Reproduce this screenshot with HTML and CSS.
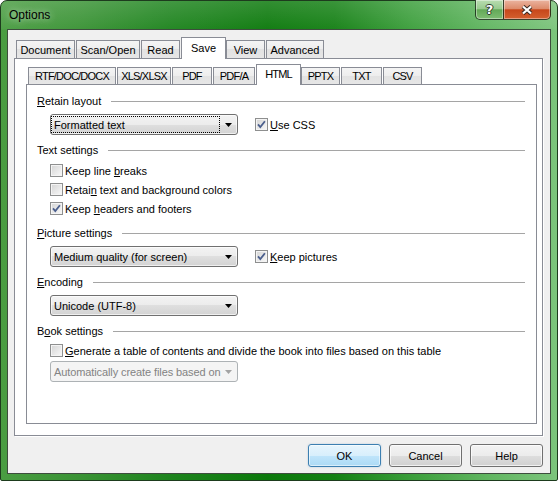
FILE: index.html
```html
<!DOCTYPE html>
<html>
<head>
<meta charset="utf-8">
<title>Options</title>
<link rel="stylesheet" href="styles.css">
</head>
<body>
<div class="window">
  <div class="titlebar">
    <span class="title">Options</span>
    <div class="caption-btns">
      <div class="cbtn help">?</div>
      <div class="cbtn close">
        <svg class="xglyph" width="12" height="10" viewBox="0 0 12 10">
          <path d="M2 1.5 L10 8.5 M10 1.5 L2 8.5" stroke="#3b2a22" stroke-width="4.2" fill="none"/>
          <path d="M2 1.5 L10 8.5 M10 1.5 L2 8.5" stroke="#ffffff" stroke-width="2.3" fill="none"/>
        </svg>
      </div>
    </div>
  </div>
  <div class="client">
    <div class="tabs tabs-outer">
      <div class="tab w-doc">Document</div>
      <div class="tab w-scan">Scan/Open</div>
      <div class="tab w-read">Read</div>
      <div class="tab sel w-save">Save</div>
      <div class="tab w-view">View</div>
      <div class="tab w-adv">Advanced</div>
    </div>
    <div class="panel panel-outer">
      <div class="tabs tabs-inner">
        <div class="tab caps w-rtf">RTF/DOC/DOCX</div>
        <div class="tab caps w-xls">XLS/XLSX</div>
        <div class="tab caps w-pdf">PDF</div>
        <div class="tab caps w-pdfa">PDF/A</div>
        <div class="tab caps sel w-html">HTML</div>
        <div class="tab caps w-pptx">PPTX</div>
        <div class="tab caps w-txt">TXT</div>
        <div class="tab caps w-csv">CSV</div>
      </div>
      <div class="panel panel-inner">
        <div class="group">
          <div class="ghead"><span><u>R</u>etain layout</span><i class="rule"></i></div>
          <div class="combo-row">
            <div class="combo focus">
              <span class="combo-text">Formatted text</span>
              <svg class="arrow" width="7" height="4" viewBox="0 0 7 4"><path d="M0 0 H7 L3.5 4 Z"/></svg>
            </div>
            <div class="cb checked side"><svg width="11" height="11" viewBox="0 0 11 11"><path d="M2 5.3 L4.3 8 L8.9 2.3" stroke="#4b5f8d" stroke-width="1.8" fill="none"/></svg></div>
            <span class="label"><u>U</u>se CSS</span>
          </div>
        </div>
        <div class="group">
          <div class="ghead"><span>Text settings</span><i class="rule"></i></div>
          <div class="checks">
            <div class="check"><div class="cb"></div><span class="label">Keep line <u>b</u>reaks</span></div>
            <div class="check"><div class="cb"></div><span class="label">Retai<u>n</u> text and background colors</span></div>
            <div class="check"><div class="cb checked"><svg width="11" height="11" viewBox="0 0 11 11"><path d="M2 5.3 L4.3 8 L8.9 2.3" stroke="#4b5f8d" stroke-width="1.8" fill="none"/></svg></div><span class="label">Keep <u>h</u>eaders and footers</span></div>
          </div>
        </div>
        <div class="group">
          <div class="ghead"><span><u>P</u>icture settings</span><i class="rule"></i></div>
          <div class="combo-row">
            <div class="combo">
              <span class="combo-text">Medium quality (for screen)</span>
              <svg class="arrow" width="7" height="4" viewBox="0 0 7 4"><path d="M0 0 H7 L3.5 4 Z"/></svg>
            </div>
            <div class="cb checked side"><svg width="11" height="11" viewBox="0 0 11 11"><path d="M2 5.3 L4.3 8 L8.9 2.3" stroke="#4b5f8d" stroke-width="1.8" fill="none"/></svg></div>
            <span class="label"><u>K</u>eep pictures</span>
          </div>
        </div>
        <div class="group">
          <div class="ghead"><span><u>E</u>ncoding</span><i class="rule"></i></div>
          <div class="combo-row">
            <div class="combo">
              <span class="combo-text">Unicode (UTF-8)</span>
              <svg class="arrow" width="7" height="4" viewBox="0 0 7 4"><path d="M0 0 H7 L3.5 4 Z"/></svg>
            </div>
          </div>
        </div>
        <div class="group">
          <div class="ghead"><span>B<u>o</u>ok settings</span><i class="rule"></i></div>
          <div class="check gen"><div class="cb"></div><span class="label"><u>G</u>enerate a table of contents and divide the book into files based on this table</span></div>
          <div class="combo-row tight">
            <div class="combo disabled">
              <span class="combo-text">Automatically create files based on</span>
              <svg class="arrow" width="7" height="4" viewBox="0 0 7 4"><path d="M0 0 H7 L3.5 4 Z"/></svg>
            </div>
          </div>
        </div>
      </div>
    </div>
    <div class="actions">
      <div class="btn default">OK</div>
      <div class="btn">Cancel</div>
      <div class="btn">Help</div>
    </div>
  </div>
</div>
</body>
</html>
```
FILE: styles.css
```css
* { box-sizing: border-box; }
html, body { margin: 0; padding: 0; }
body {
  width: 558px;
  height: 481px;
  overflow: hidden;
  font-family: "Liberation Sans", Arial, sans-serif;
  font-size: 11px;
  color: #000;
  background: #ffffff;
}
u { text-decoration-thickness: 1px; text-underline-offset: 1px; }

.window {
  width: 558px;
  height: 481px;
  border: 1px solid #1d3b1d;
  border-radius: 7px 7px 2px 2px;
  padding: 0 6px 6px 6px;
  display: flex;
  flex-direction: column;
  background:
    linear-gradient(180deg, rgba(255,255,255,0.16) 0px, rgba(255,255,255,0.04) 28px, rgba(255,255,255,0) 29px),
    linear-gradient(90deg, #4a9d42 0%, #3a9335 14%, #1e841e 30%, #0b790b 48%, #148014 60%, #3c9f3c 74%, #62b662 88%, #7cc47c 100%);
}

.titlebar {
  height: 28px;
  flex: none;
  display: flex;
  align-items: center;
}
.title {
  margin-left: 2px;
  font-size: 12px;
  color: #000;
  text-shadow: 0 0 6px rgba(255,255,255,0.55), 0 0 12px rgba(255,255,255,0.35);
}
.caption-btns {
  margin-left: auto;
  align-self: flex-start;
  margin-top: -1px;
  display: flex;
}
.cbtn {
  height: 20px;
  border: 1px solid rgba(25,45,25,0.85);
  border-top: none;
  display: flex;
  align-items: center;
  justify-content: center;
  box-shadow: inset 0 0 0 1px rgba(255,255,255,0.4);
}
.help {
  width: 28px;
  border-right: none;
  border-radius: 0 0 0 5px;
  background: linear-gradient(#b9ddb1 0%, #99cb8f 45%, #63a957 52%, #7fbd73 100%);
  color: #fff;
  font-weight: bold;
  font-size: 13px;
  font-family: "DejaVu Sans", "Liberation Sans", sans-serif;
  text-shadow: 1px 0 0 #2d3b2d, -1px 0 0 #2d3b2d, 0 1px 0 #2d3b2d, 0 -1px 0 #2d3b2d;
}
.close {
  width: 48px;
  border-radius: 0 0 5px 0;
  background: linear-gradient(#ebb4a0 0%, #dd8c6c 45%, #c7471b 52%, #d4602f 100%);
}
.xglyph { display: block; }

.client {
  flex: 1;
  background: #f0f0f0;
  border: 1px solid #3d4d3d;
  padding: 7px 7px 6px 6px;
  display: flex;
  flex-direction: column;
}

.tabs {
  display: flex;
  align-items: flex-end;
  flex: none;
  padding-left: 2px;
}
.tabs-outer { height: 21px; }
.tabs-inner { height: 20px; }
.tab {
  border: 1px solid #898c95;
  border-bottom: none;
  margin-right: 1px;
  display: flex;
  align-items: center;
  justify-content: center;
  white-space: nowrap;
  background: linear-gradient(#f4f4f4, #ededed 50%, #e2e2e2 50%, #e6e6e6);
}
.tab.caps { letter-spacing: -0.8px; }
.tabs-outer .tab { height: 18px; }
.tabs-inner .tab { height: 17px; }
.tab.sel {
  background: #ffffff;
  position: relative;
  z-index: 1;
  margin-bottom: -1px;
  margin-right: 0;
  padding-bottom: 2px;
}
.tabs-outer .tab.sel { height: 22px; }
.tabs-inner .tab.sel { height: 21px; }

.w-doc { width: 59px; }
.w-scan { width: 64px; }
.w-read { width: 39px; }
.w-save { width: 45px; }
.w-view { width: 39px; }
.w-adv { width: 58px; }

.w-rtf { width: 88px; }
.w-xls { width: 54px; }
.w-pdf { width: 40px; }
.w-pdfa { width: 42px; }
.w-html { width: 45px; }
.w-pptx { width: 39px; }
.w-txt { width: 41px; }
.w-csv { width: 39px; }

.panel {
  border: 1px solid #898c95;
  background: #ffffff;
}
.panel-outer {
  height: 378px;
  flex: none;
  padding: 5px 5px 11px 11px;
  display: flex;
  flex-direction: column;
  box-shadow: 1px 1px 0 #ffffff;
}
.panel-inner {
  height: 340px;
  flex: none;
  padding: 8px 11px 0 10px;
}

.group + .group { margin-top: 7px; }
.ghead {
  height: 16px;
  display: flex;
  align-items: center;
  gap: 10px;
  white-space: nowrap;
}
.rule {
  flex: 1;
  height: 1px;
  background: #a5a5a5;
}

.combo-row {
  display: flex;
  align-items: center;
  margin-top: 5px;
}
.combo-row.tight { margin-top: 1px; }
.combo {
  width: 188px;
  height: 21px;
  margin-left: 13px;
  border: 1px solid #707070;
  border-radius: 3px;
  background: linear-gradient(#f3f3f3, #ececec 50%, #dfdfdf 50%, #d3d3d3);
  box-shadow: inset 0 0 0 1px rgba(255,255,255,0.65);
  display: flex;
  align-items: center;
  flex: none;
}
.combo-text {
  width: 169px;
  height: 17px;
  padding-left: 2px;
  border: 1px dotted transparent;
  display: flex;
  align-items: center;
  white-space: nowrap;
  flex: none;
}
.combo.focus .combo-text { border-color: #000; }
.arrow {
  margin-left: auto;
  margin-right: 5px;
  fill: #000;
  flex: none;
}
.combo.disabled {
  border-color: #adb2b5;
  background: #f4f4f4;
  box-shadow: none;
  color: #838383;
}
.combo.disabled .combo-text { letter-spacing: -0.1px; }
.combo.disabled .arrow { fill: #a3a3a3; }

.cb {
  width: 13px;
  height: 13px;
  flex: none;
  border: 1px solid #8e8f8f;
  background: linear-gradient(135deg, #d4d4d4, #f9f9f9);
  box-shadow: inset 0 0 0 1px #f4f4f4;
}
.cb svg { display: block; }
.cb.side { margin-left: 17px; margin-right: 2px; }

.checks { margin-top: 3px; }
.check {
  height: 19px;
  display: flex;
  align-items: center;
  gap: 2px;
  padding-left: 13px;
  white-space: nowrap;
}
.check.gen { margin-top: 2px; }
.label { white-space: nowrap; }

.actions {
  display: flex;
  justify-content: flex-end;
  gap: 8px;
  margin-top: 8px;
}
.btn {
  width: 73px;
  height: 23px;
  border: 1px solid #707070;
  border-radius: 3px;
  background: linear-gradient(#f3f3f3, #ececec 50%, #dedede 50%, #d0d0d0);
  box-shadow: inset 0 0 0 1px rgba(255,255,255,0.7);
  display: flex;
  align-items: center;
  justify-content: center;
}
.btn.default {
  border-color: #3c7fb1;
  background: linear-gradient(#e7f5fd, #d8effc 50%, #c0e5fb 50%, #acdaf5);
  box-shadow: inset 0 0 0 1px rgba(255,255,255,0.55), 0 0 2px rgba(60,127,177,0.35);
}
```
